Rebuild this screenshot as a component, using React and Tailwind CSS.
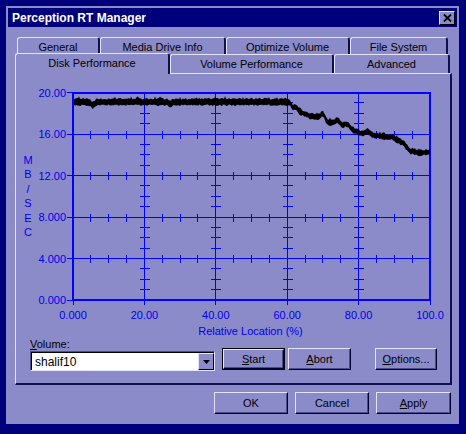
import React from 'react'

const FACE = 'bg-[#8b8bca]'

// chart geometry, in svg coords (svg sits at page x 16, y 74)
const PX0 = 57
const PX1 = 414
const PY0 = 18.5
const PY1 = 226
const xOf = (p) => PX0 + ((PX1 - PX0) * p) / 100
const yOf = (v) => PY1 - ((PY1 - PY0) * v) / 20
const crisp = (n) => Math.round(n - 0.5) + 0.5

// key points of the measured curve, page coords
const KEYS = [
  [73, 102], [286, 102], [290, 103], [293, 108], [300, 112], [310, 116],
  [322, 118], [326, 122], [340, 124], [347, 127], [353, 130], [360, 133],
  [370, 135], [387, 137], [397, 140], [403, 143], [410, 151], [420, 153], [430, 152],
]
const BUMPS = [
  [93, 3, 2], [170, 1.5, 2], [296, -2, 2], [323, -5, 2], [337, -3, 2.5],
  [347, -3, 2], [368, -3, 2], [392, -1.5, 2],
]

function curveAt(x) {
  let y = KEYS[KEYS.length - 1][1]
  for (let i = 0; i < KEYS.length - 1; i++) {
    const [x0, y0] = KEYS[i]
    const [x1, y1] = KEYS[i + 1]
    if (x >= x0 && x <= x1) {
      y = y0 + ((y1 - y0) * (x - x0)) / (x1 - x0)
      break
    }
  }
  for (const [bx, h, w] of BUMPS) {
    y += h * Math.exp(-((x - bx) * (x - bx)) / (2 * w * w))
  }
  return y
}

function bandPoints() {
  let s = 4242
  const rand = () => {
    s = (s * 16807) % 2147483647
    return s / 2147483647
  }
  const top = []
  const bot = []
  for (let px = 74; px <= 430; px += 1) {
    const yc = curveAt(px) - 74
    const thick = px < 288 ? 2.4 : 1.9
    let t = yc - thick - rand() * 1.8
    if (rand() < 0.1) t -= 1.5
    const b = yc + thick + rand() * 1.6
    top.push(`${px - 16},${t.toFixed(1)}`)
    bot.unshift(`${px - 16},${b.toFixed(1)}`)
  }
  return top.concat(bot).join(' ')
}

function Chart() {
  const hLines = [4, 8, 12, 16]
  const vLines = [20, 40, 60, 80]
  const minorP = [5, 10, 15, 25, 30, 35, 45, 50, 55, 65, 70, 75, 85, 90, 95]
  const minorV = [1, 2, 3, 5, 6, 7, 9, 10, 11, 13, 14, 15, 17, 18, 19]
  const yLabels = ['0.000', '4.000', '8.000', '12.00', '16.00', '20.00']
  const xLabels = ['0.000', '20.00', '40.00', '60.00', '80.00', '100.0']
  const letters = ['M', 'B', '/', 'S', 'E', 'C']

  return (
    <svg width="434" height="263" className="block" fontSize="11">
      <g stroke="#0000ff" strokeWidth="1" shapeRendering="crispEdges">
        {hLines.map((v) => (
          <line key={'h' + v} x1={PX0} x2={PX1} y1={crisp(yOf(v))} y2={crisp(yOf(v))} />
        ))}
        {vLines.map((p) => (
          <line key={'v' + p} x1={crisp(xOf(p))} x2={crisp(xOf(p))} y1={PY0} y2={PY1} />
        ))}
        {hLines.map((v) =>
          minorP.map((p) => (
            <line
              key={'mh' + v + '-' + p}
              x1={crisp(xOf(p))}
              x2={crisp(xOf(p))}
              y1={crisp(yOf(v)) - 4}
              y2={crisp(yOf(v)) + 4}
            />
          ))
        )}
        {vLines.map((p) =>
          minorV.map((v) => (
            <line
              key={'mv' + p + '-' + v}
              x1={crisp(xOf(p)) - 5}
              x2={crisp(xOf(p)) + 5}
              y1={crisp(yOf(v))}
              y2={crisp(yOf(v))}
            />
          ))
        )}
        {[0, 4, 8, 12, 16, 20].map((v) => (
          <line key={'lt' + v} x1={51} x2={PX0} y1={crisp(yOf(v))} y2={crisp(yOf(v))} />
        ))}
        {[0, 20, 40, 60, 80, 100].map((p) => (
          <line key={'bt' + p} x1={crisp(xOf(p))} x2={crisp(xOf(p))} y1={PY1} y2={PY1 + 5} />
        ))}
        <rect x={PX0} y={PY0} width={PX1 - PX0} height={PY1 - PY0} fill="none" strokeWidth="2" />
      </g>

      <polygon points={bandPoints()} fill="#000" />

      <g fill="#0000e8">
        {yLabels.map((t, i) => (
          <text key={t} x="50" y={yOf(i * 4) + 4} textAnchor="end">
            {t}
          </text>
        ))}
        {xLabels.map((t, i) => (
          <text key={t} x={xOf(i * 20)} y="245" textAnchor="middle">
            {t}
          </text>
        ))}
        {letters.map((t, i) => (
          <text key={i} x="12" y={90 + i * 14.4} textAnchor="middle">
            {t}
          </text>
        ))}
        <text x="234.5" y="261" textAnchor="middle">
          Relative Location (%)
        </text>
      </g>
    </svg>
  )
}

function Tab({ children, className, selected }) {
  return (
    <div
      className={`flex justify-center border-t border-l border-[#e4e4ff] border-r-2 border-r-[#101050] rounded-tl-[3px] rounded-tr-[3px] ${FACE} ${
        selected ? 'relative z-10 h-[21px] -mb-[1px] items-start pt-[2px]' : ''
      } ${className}`}
    >
      {children}
    </div>
  )
}

function Button({ children, className, isDefault }) {
  const inner = (
    <div className="flex h-full w-full items-center justify-center border-t border-l border-[#e4e4ff] border-r border-b border-r-[#000030] border-b-[#000030] shadow-[inset_-1px_-1px_0_#4c4c8c]">
      {children}
    </div>
  )
  if (isDefault) {
    return <div className={`border border-black ${FACE} ${className}`}>{inner}</div>
  }
  return <div className={`${FACE} ${className}`}>{inner}</div>
}

function Combo() {
  return (
    <div className="flex h-[20px] w-[185px] border-t border-l border-[#4c4c8c] border-r border-b border-r-[#e4e4ff] border-b-[#e4e4ff]">
      <div className="flex flex-1 items-center border-t border-l border-black bg-white pl-[3px] text-[12px]">
        shalif10
      </div>
      <div className="flex w-[16px] items-center justify-center border-t border-black bg-[#8b8bca]">
        <div className="flex h-full w-full items-center justify-center border-t border-l border-[#e4e4ff] border-r border-b border-r-[#000030] border-b-[#000030]">
          <svg width="7" height="4" viewBox="0 0 7 4">
            <polygon points="0,0 7,0 3.5,4" fill="#000" />
          </svg>
        </div>
      </div>
    </div>
  )
}

export default function App() {
  return (
    <div className="h-[434px] w-[466px] bg-[#00007b] pl-[6px] pt-[6px] font-['Liberation_Sans',Arial,sans-serif] text-[11px] leading-none text-black">
      <div className={`flex h-[418px] w-[453px] flex-col p-[2px] ${FACE}`}>
        {/* title bar */}
        <div className="flex h-[19px] items-center justify-between bg-[#00007b] pl-[4px] pr-[2px]">
          <span className="text-[12px] font-bold text-white">Perception RT Manager</span>
          <div className={`flex h-[14px] w-[16px] items-center justify-center border-t border-l border-[#e4e4ff] border-r border-b border-r-black border-b-black ${FACE}`}>
            <svg width="9" height="8" viewBox="0 0 9 8">
              <path d="M1 0.5 L8 7.5 M8 0.5 L1 7.5" stroke="#000" strokeWidth="1.8" />
            </svg>
          </div>
        </div>

        {/* tabs */}
        <div className="mt-[10px] flex flex-col">
          <div className="ml-[9px] flex h-[17px]">
            <Tab className="w-[83px] items-start pt-[4px]">General</Tab>
            <Tab className="w-[126px] items-start pt-[4px]">Media Drive Info</Tab>
            <Tab className="w-[124px] items-start pt-[4px]">Optimize Volume</Tab>
            <Tab className="w-[98px] items-start pt-[4px]">File System</Tab>
          </div>
          <div className="ml-[7px] flex h-[19px] items-end">
            <Tab selected className="w-[155px]">
              <span className="pt-[2px]">Disk Performance</span>
            </Tab>
            <Tab className="h-[19px] w-[164px] items-center">Volume Performance</Tab>
            <Tab className="h-[19px] w-[116px] items-center">Advanced</Tab>
          </div>

          {/* panel */}
          <div className="ml-[7px] flex h-[312px] w-[437px] flex-col border-t border-l border-[#e4e4ff] border-r-2 border-b-2 border-r-[#101050] border-b-[#101050]">
            <Chart />
            <div className="flex items-end pl-[14px]">
              <div className="flex flex-col">
                <div className="h-[14px] leading-[14px]">
                  <span className="underline">V</span>olume:
                </div>
                <Combo />
              </div>
              <Button isDefault className="mb-[1px] ml-[7px] h-[22px] w-[63px]">
                <span>
                  <span className="underline">S</span>tart
                </span>
              </Button>
              <Button className="mb-[1px] ml-[3px] h-[22px] w-[63px]">
                <span>
                  <span className="underline">A</span>bort
                </span>
              </Button>
              <Button className="mb-[1px] ml-[24px] h-[22px] w-[62px]">
                <span>
                  <span className="underline">O</span>ptions...
                </span>
              </Button>
            </div>
          </div>
        </div>

        {/* dialog buttons */}
        <div className="mt-[7px] flex justify-end gap-[7px] pr-[6px]">
          <Button className="h-[22px] w-[74px]">OK</Button>
          <Button className="h-[22px] w-[74px]">Cancel</Button>
          <Button className="h-[22px] w-[75px]">
            <span>
              <span className="underline">A</span>pply
            </span>
          </Button>
        </div>
      </div>
    </div>
  )
}
